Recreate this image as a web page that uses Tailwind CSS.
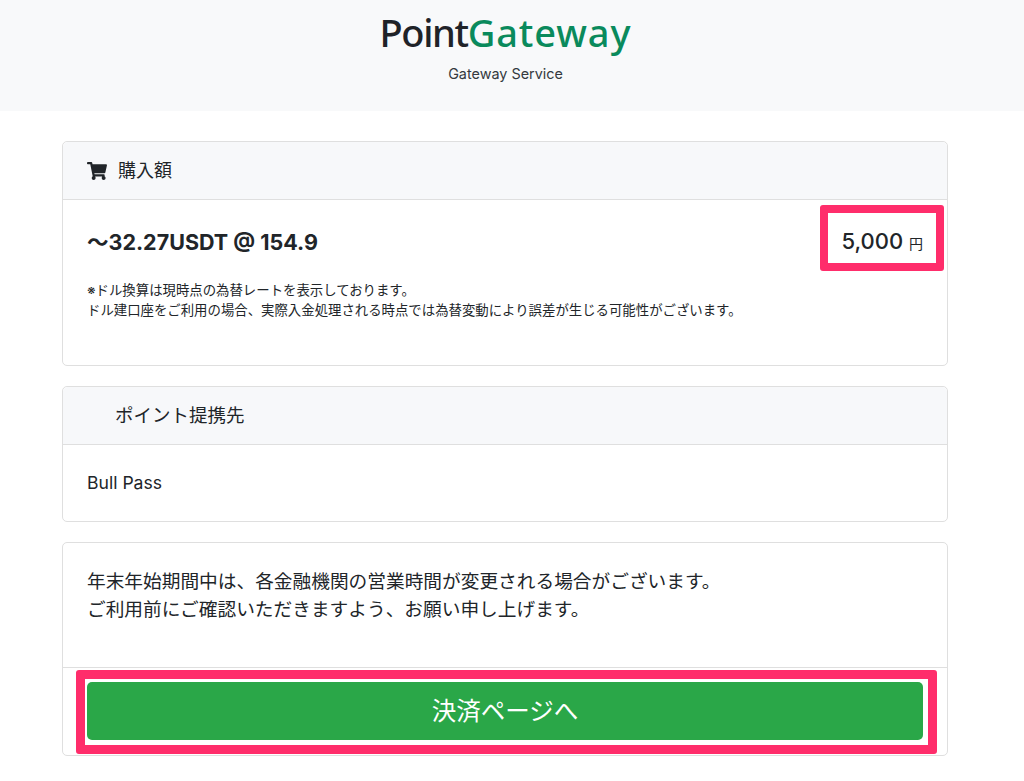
<!DOCTYPE html>
<html lang="ja">
  <head>
    <meta charset="UTF-8" />
    <meta name="viewport" content="width=device-width, initial-scale=1.0" />
    <title>PointGateway</title>
    <script src="https://cdn.jsdelivr.net/npm/@tailwindcss/browser@4"></script>
  </head>
  <body class="bg-white text-[#212529] font-['Inter','Noto_Sans_CJK_JP',sans-serif] h-[781px] overflow-hidden">
    <!-- Header -->
    <header class="bg-[#f8f9fa] h-[111px] flex flex-col items-center pr-[13px]">
      <div class="mt-[8px] text-[38px] leading-[48px] tracking-[-1.4px] font-medium font-['Noto_Sans','Noto_Sans_CJK_JP',sans-serif] text-[#1f2328]">Point<span class="text-[#0a8a5c] tracking-[0.9px]">Gateway</span></div>
      <p class="mt-[6px] text-[14.4px] leading-[24px] text-[#343a40]">Gateway Service</p>
    </header>

    <main class="mx-[62px] mt-[30px] w-[886px] flex flex-col gap-[20px]">
      <!-- 購入額 -->
      <section class="relative h-[225px] border border-[#dfdfdf] rounded-[5px]">
        <div class="h-[58px] bg-[#f7f8fa] border-b border-[#dfdfdf] rounded-t-[5px] flex items-center pl-[24px] gap-[11px]">
          <svg class="w-[20px] h-[18px]" viewBox="0 0 576 512" fill="#212529"><path d="M528 301.3l47.3-208C578.700 78.300 567.300 64 552 64H159.200l-9.200-44.800C147.800 8 137.900 0 126.500 0H24C10.700 0 0 10.700 0 24v16c0 13.300 10.700 24 24 24h69.900l70.200 343.400C147.300 417.100 136 435.200 136 456c0 30.900 25.100 56 56 56s56-25.100 56-56c0-15.700-6.400-29.800-16.800-40h209.600C430.400 426.200 424 440.300 424 456c0 30.900 25.100 56 56 56s56-25.100 56-56c0-22.200-12.900-41.300-31.600-50.400l5.500-24.300c3.400-15-8-29.300-23.400-29.300H218.100l-6.500-32h293c11.200 0 20.900-7.800 23.400-18.700z"/></svg>
          <span class="text-[18px]">購入額</span>
        </div>
        <div class="flex justify-between items-center pl-[24px] pr-[24px] mt-[26px] h-[32px]">
          <h2 class="text-[21.500px] font-bold">〜32.27USDT @ 154.9</h2>
          <div class="text-[22px] font-medium pb-[2px]">5,000 <span class="text-[14px] font-normal">円</span></div>
        </div>
        <p class="pl-[24px] mt-[22px] text-[13.4px] leading-[20px]">※ドル換算は現時点の為替レートを表示しております。<br />ドル建口座をご利用の場合、実際入金処理される時点では為替変動により誤差が生じる可能性がございます。</p>
        <!-- highlight -->
        <div class="absolute left-[757px] top-[63px] w-[124px] h-[66px] border-[8px] border-[#ff2d6b] rounded-[3px]"></div>
      </section>

      <!-- ポイント提携先 -->
      <section class="h-[136px] border border-[#dfdfdf] rounded-[5px]">
        <div class="h-[58px] bg-[#f7f8fa] border-b border-[#dfdfdf] rounded-t-[5px] flex items-center pl-[52px]">
          <span class="text-[18.5px]">ポイント提携先</span>
        </div>
        <p class="pl-[24px] mt-[26px] text-[17.6px] leading-[24px]">Bull Pass</p>
      </section>

      <!-- Notice -->
      <section class="relative h-[214px] border border-[#dfdfdf] rounded-[5px]">
        <div class="h-[125px] border-b border-[#dfdfdf] pl-[24px] pt-[25px] text-[18.7px] leading-[28px]">
          <p>年末年始期間中は、各金融機関の営業時間が変更される場合がございます。</p>
          <p>ご利用前にご確認いただきますよう、お願い申し上げます。</p>
        </div>
        <div class="px-[24px] pt-[14px]">
          <button class="w-full h-[58px] bg-[#2aa748] text-white text-[24.5px] rounded-[5px]">決済ページへ</button>
        </div>
        <!-- highlight -->
        <div class="absolute left-[13px] top-[127px] w-[861px] h-[84px] border-[9px] border-[#ff2d6b] rounded-[3px]"></div>
      </section>
    </main>
  </body>
</html>
